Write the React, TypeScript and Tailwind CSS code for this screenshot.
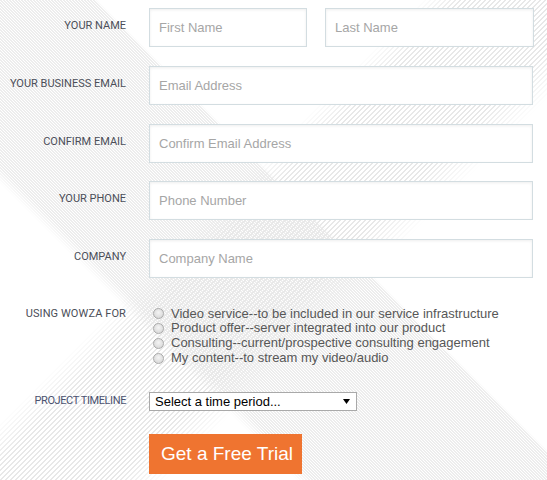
import React from "react";

function Label({ children, extra }: { children: React.ReactNode; extra: string }) {
  return (
    <div
      className={
        "w-[126px] shrink-0 text-right uppercase text-[11px] text-[#4b4e58] font-['Roboto',sans-serif] " +
        extra
      }
    >
      {children}
    </div>
  );
}

const inputCls =
  "h-[39px] border border-[#d3dde1] bg-white shadow-[inset_0_1px_3px_rgba(0,0,0,0.07)] pl-[9px] pr-[9px] text-[13px] text-[#333] font-['Liberation_Sans',Arial,sans-serif] placeholder:text-[#a6a6a6] outline-none";

function Radio({ text }: { text: string }) {
  return (
    <label className="flex items-center h-[14.7px]">
      <span className="ml-[3.5px] w-[11px] h-[11px] rounded-full border border-[#ababab] bg-[radial-gradient(circle_at_50%_40%,#f4f4f4_0%,#dcdcdc_70%,#cfcfcf_100%)] shrink-0" />
      <span className="ml-[7.5px] text-[13px] leading-[14.7px] text-[#575757] font-['Liberation_Sans',Arial,sans-serif] whitespace-nowrap">
        {text}
      </span>
    </label>
  );
}

export default function App() {
  return (
    <div className="grid w-[547px] h-[480px] overflow-hidden bg-white">
      <div className="col-start-1 row-start-1 bg-[image:repeating-linear-gradient(45deg,#ededed_0px,#ededed_0.8px,transparent_0.8px,transparent_2.1213px)] [mask-image:linear-gradient(45deg,transparent_28.8%,#000_30.6%,#000_55.8%,transparent_56.2%)] [-webkit-mask-image:linear-gradient(45deg,transparent_28.8%,#000_30.6%,#000_55.8%,transparent_56.2%)]" />
      <div className="col-start-1 row-start-1 bg-[image:repeating-linear-gradient(135deg,#e8e8e8_0px,#e8e8e8_0.8px,transparent_0.8px,transparent_3.5355px)] [mask-image:linear-gradient(135deg,transparent_41%,#000_45%,#000_58%,transparent_63%)] [-webkit-mask-image:linear-gradient(135deg,transparent_41%,#000_45%,#000_58%,transparent_63%)]" />
      <form className="isolate col-start-1 row-start-1 flex flex-col pt-[8px]">
        <div className="flex flex-col gap-[18.75px]">
          <div className="flex items-start gap-[23px]">
            <Label extra="leading-[14px] pt-[11px]">Your Name</Label>
            <div className="flex">
              <input className={inputCls + " w-[158px]"} placeholder="First Name" />
              <input className={inputCls + " w-[209px] ml-[18px]"} placeholder="Last Name" />
            </div>
          </div>
          <div className="flex items-start gap-[23px]">
            <Label extra="leading-[14px] pt-[11px]">Your Business Email</Label>
            <input className={inputCls + " w-[384px]"} placeholder="Email Address" />
          </div>
          <div className="flex items-start gap-[23px]">
            <Label extra="leading-[14px] pt-[11px]">Confirm Email</Label>
            <input className={inputCls + " w-[384px]"} placeholder="Confirm Email Address" />
          </div>
          <div className="flex items-start gap-[23px]">
            <Label extra="leading-[14px] pt-[11px]">Your Phone</Label>
            <input className={inputCls + " w-[384px]"} placeholder="Phone Number" />
          </div>
          <div className="flex items-start gap-[23px]">
            <Label extra="leading-[14px] pt-[11px]">Company</Label>
            <input className={inputCls + " w-[384px]"} placeholder="Company Name" />
          </div>
        </div>

        <div className="flex items-start gap-[23px] mt-[28.65px]">
          <Label extra="leading-[14.7px] tracking-[0.1px]">Using Wowza For</Label>
          <div className="flex flex-col">
            <Radio text="Video service--to be included in our service infrastructure" />
            <Radio text="Product offer--server integrated into our product" />
            <Radio text="Consulting--current/prospective consulting engagement" />
            <Radio text="My content--to stream my video/audio" />
          </div>
        </div>

        <div className="flex items-start gap-[23px] mt-[26.55px]">
          <Label extra="leading-[14px] pt-[2px] tracking-[-0.4px] text-[#4b5270]">Project Timeline</Label>
          <div className="w-[208px] h-[19px] border border-[#a9a9a9] bg-white flex items-center justify-between pl-[5px] pr-[6px] text-[13px] leading-[15px] text-black font-['Liberation_Sans',Arial,sans-serif]">
            <span>Select a time period...</span>
            <svg width="7" height="5" viewBox="0 0 7 5">
              <polygon points="0,0 7,0 3.5,5" fill="#000" />
            </svg>
          </div>
        </div>

        <div className="mt-[23px] ml-[149px]">
          <button
            type="button"
            className="w-[153px] h-[40px] bg-[#ef7430] text-white text-left pl-[12px] text-[19px] leading-[22px] font-['Liberation_Sans',Arial,sans-serif]"
          >
            Get a Free Trial
          </button>
        </div>
      </form>
    </div>
  );
}
